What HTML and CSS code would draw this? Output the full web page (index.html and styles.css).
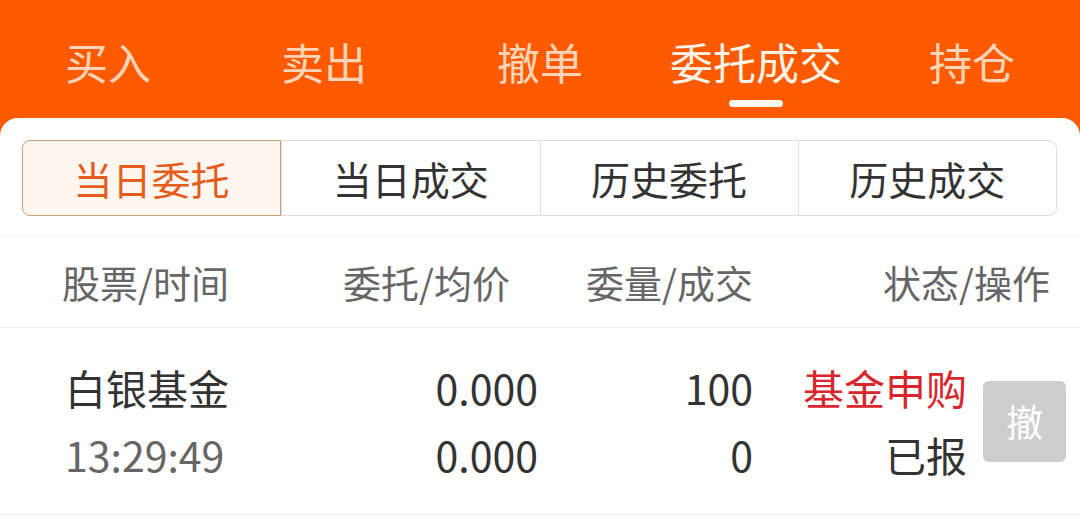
FILE: index.html
```html
<!DOCTYPE html>
<html lang="zh-CN">
<head>
    <meta charset="UTF-8">
    <meta name="viewport" content="width=device-width, initial-scale=1.0">
    <title>委托成交</title>
    <link rel="stylesheet" href="styles.css">
</head>
<body>
    <nav class="top-tabs">
        <div class="top-tab">买入</div>
        <div class="top-tab">卖出</div>
        <div class="top-tab">撤单</div>
        <div class="top-tab active">委托成交</div>
        <div class="top-tab">持仓</div>
    </nav>
    <main class="card">
        <div class="segment">
            <div class="segment-item active">当日委托</div>
            <div class="segment-item">当日成交</div>
            <div class="segment-item">历史委托</div>
            <div class="segment-item">历史成交</div>
        </div>
        <div class="table-head">
            <div class="cell first">股票/时间</div>
            <div class="cell price">委托/均价</div>
            <div class="cell qty">委量/成交</div>
            <div class="cell status">状态/操作</div>
        </div>
        <div class="table-row">
            <div class="cell first">
                <div class="line">白银基金</div>
                <div class="line sub">13:29:49</div>
            </div>
            <div class="cell num">
                <div class="line">0.000</div>
                <div class="line">0.000</div>
            </div>
            <div class="cell num">
                <div class="line">100</div>
                <div class="line">0</div>
            </div>
            <div class="cell action">
                <div class="status-text">
                    <div class="line red">基金申购</div>
                    <div class="line">已报</div>
                </div>
                <button class="cancel-btn">撤</button>
            </div>
        </div>
    </main>
</body>
</html>
```

FILE: styles.css
```css
body {
    margin: 0;
    padding: 0;
    background-color: #ff5a00;
    font-family: "Noto Sans CJK SC", "Noto Sans", sans-serif;
    height: 521px;
    overflow: hidden;
    display: flex;
    flex-direction: column;
}
.top-tabs {
    display: grid;
    grid-template-columns: repeat(5, 1fr);
    height: 118px;
}
.top-tab {
    display: flex;
    flex-direction: column;
    align-items: center;
    padding-top: 35px;
    font-size: 43px;
    line-height: 52px;
    color: rgba(255, 236, 220, 0.85);
}
.top-tab.active {
    color: #fff4e8;
}
.top-tab.active::after {
    content: "";
    width: 54px;
    height: 7px;
    margin-top: 13px;
    border-radius: 4px;
    background: #fff6ee;
}
.card {
    flex-grow: 1;
    background: #fff;
    border-radius: 18px 18px 0 0;
    padding-top: 22px;
}
.segment {
    display: grid;
    grid-template-columns: repeat(4, 1fr);
    margin: 0 23px 0 22px;
    height: 76px;
    border: 1px solid #dedede;
    border-radius: 8px;
    box-sizing: border-box;
}
.segment-item {
    display: flex;
    align-items: center;
    justify-content: center;
    font-size: 39px;
    color: #333;
    border-left: 1px solid #dedede;
}
.segment-item:first-child {
    border-left: none;
}
.segment-item.active {
    margin: -1px 0 -1px -1px;
    background: #fff6ef;
    color: #e55d1c;
    border: 1px solid #c9a07a;
    border-radius: 8px 0 0 8px;
}
.table-head,
.table-row {
    display: grid;
    grid-template-columns: 270px 268px 215px 1fr;
    align-items: center;
}
.table-head {
    margin-top: 19px;
    height: 91px;
    border-top: 1px solid #f3f3f3;
    border-bottom: 1px solid #efefef;
    font-size: 38px;
    color: #666;
}
.table-head .first {
    padding-left: 62px;
}
.table-head .price {
    text-align: right;
    padding-right: 28px;
}
.table-head .qty {
    text-align: right;
}
.table-head .status {
    text-align: right;
    padding-right: 30px;
}
.table-row {
    padding: 26px 0 26px;
    border-bottom: 1px solid #efefef;
    font-size: 41px;
    color: #333;
}
.line {
    line-height: 67px;
}
.line.sub {
    color: #666;
}
.line.red {
    color: #d8262c;
}
.table-row .first {
    padding-left: 65px;
}
.cell.num {
    text-align: right;
}
.cell.action {
    display: flex;
    align-items: center;
    justify-content: flex-end;
    gap: 16px;
    padding-right: 14px;
}
.status-text {
    text-align: right;
}
.cancel-btn {
    width: 83px;
    height: 81px;
    border: none;
    border-radius: 6px;
    background: #cdcdcd;
    color: #fff;
    font-family: inherit;
    font-size: 37px;
    padding: 0;
}
```
